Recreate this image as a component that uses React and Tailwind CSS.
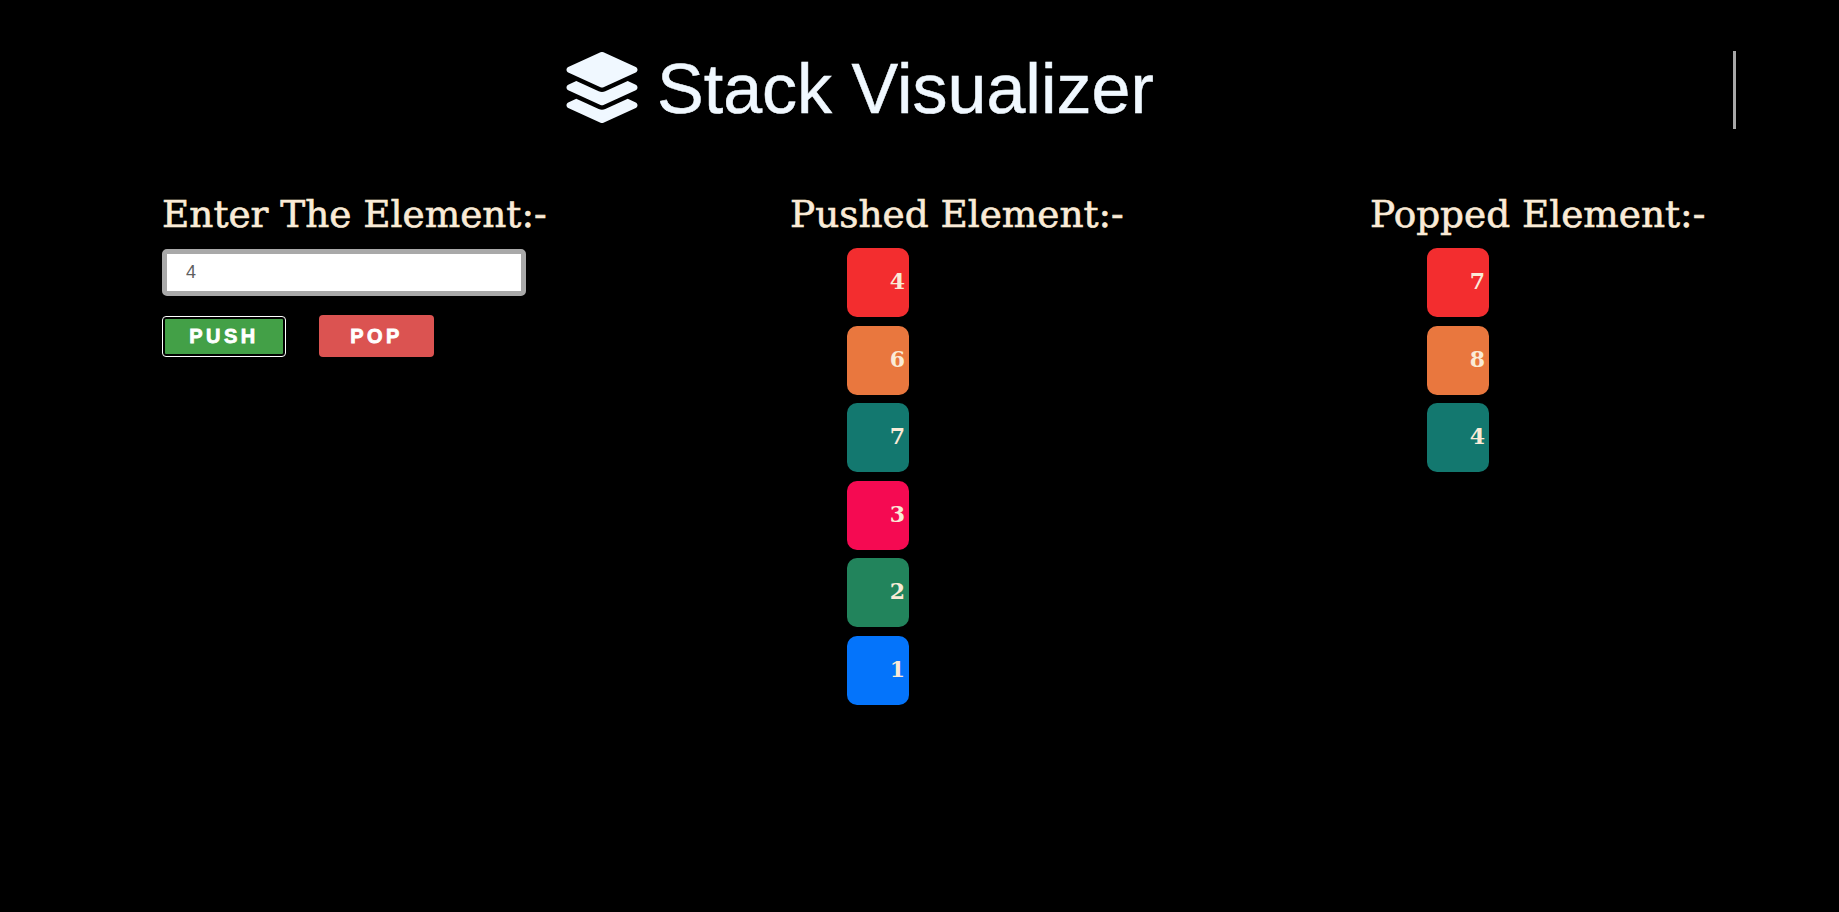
import React, { useState } from 'react';
import { FaLayerGroup } from 'react-icons/fa';

const TILE_COLORS = ['bg-[#f32d2f]', 'bg-[#e9773e]', 'bg-[#13786f]', 'bg-[#f50a52]', 'bg-[#22845c]', 'bg-[#0474fb]'];

const Tile = ({ value, index }) => (
  <div
    className={`${TILE_COLORS[index]} w-[62px] h-[69px] rounded-[10px] flex items-center justify-end pr-[4px] pb-[2px] text-[22px] font-bold text-[#faebd7] font-['DejaVu_Serif',serif]`}
  >
    {value}
  </div>
);

const Heading = ({ children }) => (
  <h2 className="text-[37.4px] leading-[46px] whitespace-nowrap text-[#faebd7] font-['DejaVu_Serif',serif] [-webkit-text-stroke:0.6px_#faebd7]">{children}</h2>
);

const TileList = ({ title, values }) => (
  <div>
    <Heading>{title}</Heading>
    <div className="mt-[11px] ml-[57px] flex flex-col gap-[8.6px]">
      {values.map((v, i) => (
        <Tile key={i} value={v} index={i} />
      ))}
    </div>
  </div>
);

const App = () => {
  const [value, setValue] = useState('4');

  return (
    <div className="min-h-[912px] bg-black overflow-hidden">
      {/* Header */}
      <header className="relative h-[191px] pt-[52px] pl-[566px] flex items-start gap-[19px] text-[#f0f8ff]">
        <FaLayerGroup className="w-[72px] h-[71px]" />
        <h1 className="mt-[1px] text-[70px] leading-[72px] font-['Liberation_Sans',sans-serif] [-webkit-text-stroke:0.5px_#f0f8ff]">Stack Visualizer</h1>
        <div className="absolute left-[1733px] top-[51px] w-[3px] h-[78px] bg-[#a8a8a8]" />
      </header>

      <main className="flex items-start pl-[162px]">
        {/* Input column */}
        <div className="w-[628px]">
          <Heading>Enter The Element:-</Heading>
          <input
            value={value}
            onChange={(e) => setValue(e.target.value)}
            className="mt-[12px] block w-[364px] h-[47px] px-[19px] bg-white border-[5px] border-[#a9a9a9] rounded-[5px] text-[18px] text-[#5f5f5f] font-['Liberation_Sans',sans-serif] outline-none"
          />
          <div className="mt-[19px] flex items-center font-['Liberation_Sans',sans-serif]">
            <button className="ml-[1px] w-[122px] h-[39px] rounded-[3px] bg-[#43a047] border-2 border-black outline-1 outline-white text-white text-[20px] font-bold tracking-[3.5px] [-webkit-text-stroke:0.8px_white]">
              PUSH
            </button>
            <button className="ml-[34px] w-[115px] h-[42px] rounded-[4px] bg-[#db5351] text-white text-[20px] font-bold tracking-[3.5px] [-webkit-text-stroke:0.8px_white]">
              POP
            </button>
          </div>
        </div>

        <div className="w-[580px]">
          <TileList title="Pushed Element:-" values={[4, 6, 7, 3, 2, 1]} />
        </div>

        <TileList title="Popped Element:-" values={[7, 8, 4]} />
      </main>
    </div>
  );
};

export default App;
